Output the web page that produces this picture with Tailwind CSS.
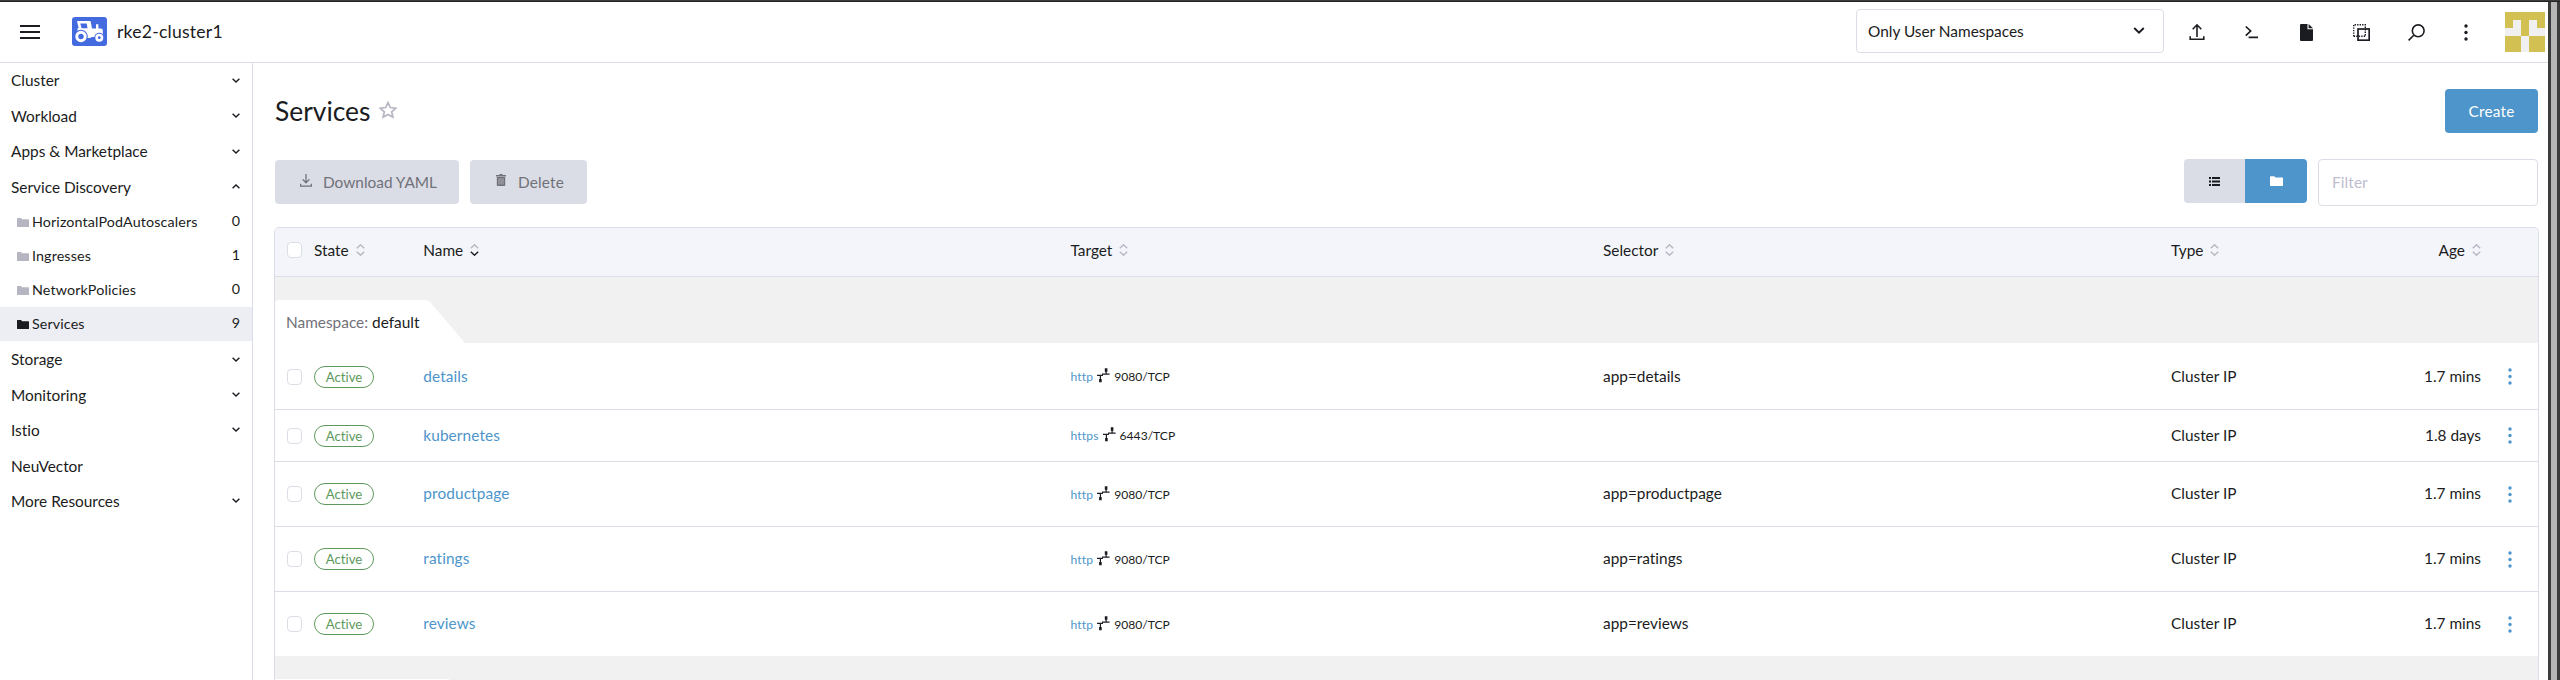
<!DOCTYPE html>
<html lang="en"><head><meta charset="utf-8"><title>rke2-cluster1 - Services</title>
<script src="https://cdn.jsdelivr.net/npm/@tailwindcss/browser@4"></script></head>
<body class="w-[2560px] h-[680px] overflow-hidden bg-white font-['Lato',sans-serif] [font-variant-ligatures:none] text-[15.4px] leading-[20px] text-[#1b1c21] flex flex-col">
<svg class="hidden">
<symbol id="down" viewBox="0 0 8 5"><path d="M.6 .7 4 4 7.4 .7" fill="none" stroke="currentColor" stroke-width="1.4"/></symbol>
<symbol id="folder" viewBox="0 0 12 9"><path d="M0 .5Q0 0 .5 0H4L5.2 1.2H11.4Q12 1.2 12 1.8V8.4Q12 9 11.4 9H.6Q0 9 0 8.4Z" fill="currentColor"/></symbol>
<symbol id="sort" viewBox="0 0 9 12"><path d="M.8 4.3 4.5 .8 8.2 4.3" fill="none" stroke="#b6b6c2" stroke-width="1.4"/><path d="M.8 7.7 4.5 11.2 8.2 7.7" fill="none" stroke="currentColor" stroke-width="1.4"/></symbol>
<symbol id="dots" viewBox="0 0 4 17"><circle cx="2" cy="2" r="1.7" fill="currentColor"/><circle cx="2" cy="8.5" r="1.7" fill="currentColor"/><circle cx="2" cy="15" r="1.7" fill="currentColor"/></symbol>
<symbol id="port" viewBox="0 0 13 15"><path d="M7.8 .3h2.6v3.4h-.7V5.6h2.9v1.2H5.9V8H4v3h.7v3.2H2.1V11h.7V8H0V6.8h5V5.6h3.5V3.7h-.7z" fill="currentColor"/></symbol>
</svg>
<div class="h-[2px] shrink-0 bg-[#3c3c3c] border-b border-[#222222]"></div>
<div class="flex flex-1 min-h-0">
<div class="w-[2548px] flex flex-col">
<header class="h-[61px] shrink-0 border-b border-[#dcdee7] flex items-center pl-5 pr-[3px]">
  <svg class="w-5 h-[14px]" viewBox="0 0 20 14"><path d="M0 1h20M0 7h20M0 13h20" stroke="#1b1c21" stroke-width="1.9"/></svg>
  <svg class="ml-8 w-[35px] h-[29px] -mt-px" viewBox="0 0 35 29"><rect width="35" height="29" rx="3" fill="#446ae0"/>
   <path d="M5.2 4H17.6q1 0 1.2 1L20 11.5h4V7.2h2.4v4.3H29q1.8 0 1.8 2V20H20l-2 1H13L5.5 14.5V11.2h1.2L5.2 5z" fill="#fff"/><path d="M8.3 6.5h6.4l.8 4.8H9.6z" fill="#446ae0"/><circle cx="9" cy="19.5" r="6.8" fill="#446ae0"/><circle cx="9" cy="19.5" r="4.2" fill="none" stroke="#fff" stroke-width="3"/><circle cx="27.3" cy="20.7" r="5" fill="#446ae0"/><circle cx="27.3" cy="20.7" r="2.7" fill="none" stroke="#fff" stroke-width="2.6"/></svg>
  <div class="ml-[10px] text-[17.6px] tracking-[0.22px]">rke2-cluster1</div>
  <div class="ml-auto w-[308px] h-11 -mt-[3px] border border-[#dcdee7] rounded-[4px] flex items-center justify-between pl-[11px] pr-[18px]"><span>Only User Namespaces</span><svg class="w-3 h-[7px]"><use href="#down"/></svg></div>
  <svg class="ml-[25px] w-4 h-[18px]" viewBox="0 0 16 18"><path d="M8 14V2.2M3.7 6.3 8 1.8l4.3 4.5M1.2 13.3v3h13.6v-3" fill="none" stroke="#1b1c21" stroke-width="1.6"/></svg>
  <svg class="ml-10 w-[13px] h-[14px]" viewBox="0 0 13 14"><path d="M.8 1.5 5.6 6 .8 10.6M3.6 12.4H13" fill="none" stroke="#1b1c21" stroke-width="1.7"/></svg>
  <svg class="ml-[42px] w-[13px] h-[17px]" viewBox="0 0 13 17"><path d="M1 0H7.5V5.2H13V16q0 1-1 1H1q-1 0-1-1V1Q0 0 1 0z" fill="#1b1c21"/><path d="M8.6 0 13 4.2H8.6z" fill="#1b1c21"/></svg>
  <svg class="ml-10 w-[17px] h-[17px]" viewBox="0 0 17 17" fill="none" stroke="#1b1c21" stroke-width="1.4"><path d="M.7 12.3V.7H12.3V12.3H.7" stroke-dasharray="1.4 1.1"/><rect x="5" y="5" width="11.2" height="11.2" stroke-width="1.7"/></svg>
  <svg class="ml-[38px] w-[17px] h-[17px]" viewBox="0 0 17 17" fill="none" stroke="#1b1c21" stroke-width="1.6"><circle cx="10.2" cy="6.8" r="5.9"/><path d="M5.8 11.2.6 16.4"/></svg>
  <svg class="ml-[39px] w-1 h-[17px]"><use href="#dots"/></svg>
  <svg class="ml-[37px] w-10 h-10" viewBox="0 0 5 5" shape-rendering="crispEdges"><path d="M0 0h5v5H0z" fill="#d2c053"/><path d="M1 1h1v2H0V2h1zM3 1h1v1h1v1H3zM2 3h1v2H2z" fill="#f0f0f0"/></svg>
</header>
<div class="flex flex-1 min-h-0">
<nav class="w-[253px] shrink-0 border-r border-[#dcdee7] [&>div]:pr-3 [&>div]:flex [&>div]:items-center [&>div]:justify-between">
  <div class="h-[35.6px] pl-[11px] pb-[1.4px]"><span>Cluster</span><svg class="w-2 h-[5px]"><use href="#down"/></svg></div>
  <div class="h-[35.6px] pl-[11px] pb-[1.4px]"><span>Workload</span><svg class="w-2 h-[5px]"><use href="#down"/></svg></div>
  <div class="h-[35.6px] pl-[11px] pb-[1.4px]"><span>Apps &amp; Marketplace</span><svg class="w-2 h-[5px]"><use href="#down"/></svg></div>
  <div class="h-[35.6px] pl-[11px] pb-[1.4px]"><span>Service Discovery</span><svg class="w-2 h-[5px] rotate-180"><use href="#down"/></svg></div>
  <div class="h-[34px] pl-[17px] text-[14.3px]"><span class="flex items-center gap-[3px]"><svg class="w-3 h-[9px] text-[#b6b6c2]"><use href="#folder"/></svg><span class="tracking-[0.12px]">HorizontalPodAutoscalers</span></span><span class="pb-[2px]">0</span></div>
  <div class="h-[34px] pl-[17px] text-[14.3px]"><span class="flex items-center gap-[3px]"><svg class="w-3 h-[9px] text-[#b6b6c2]"><use href="#folder"/></svg><span class="tracking-[0.12px]">Ingresses</span></span><span class="pb-[2px]">1</span></div>
  <div class="h-[34px] pl-[17px] text-[14.3px]"><span class="flex items-center gap-[3px]"><svg class="w-3 h-[9px] text-[#b6b6c2]"><use href="#folder"/></svg><span class="tracking-[0.12px]">NetworkPolicies</span></span><span class="pb-[2px]">0</span></div>
  <div class="h-[34px] pl-[17px] text-[14.3px] bg-[#edeef3]"><span class="flex items-center gap-[3px]"><svg class="w-3 h-[9px]"><use href="#folder"/></svg><span class="tracking-[0.12px]">Services</span></span><span class="pb-[2px]">9</span></div>
  <div class="h-[35.6px] pl-[11px]"><span>Storage</span><svg class="w-2 h-[5px]"><use href="#down"/></svg></div>
  <div class="h-[35.6px] pl-[11px]"><span>Monitoring</span><svg class="w-2 h-[5px]"><use href="#down"/></svg></div>
  <div class="h-[35.6px] pl-[11px] pb-[.8px]"><span>Istio</span><svg class="w-2 h-[5px]"><use href="#down"/></svg></div>
  <div class="h-[35.6px] pl-[11px]"><span>NeuVector</span></div>
  <div class="h-[35.6px] pl-[11px] pb-[1.2px]"><span>More Resources</span><svg class="w-2 h-[5px]"><use href="#down"/></svg></div>
</nav>
<main class="flex-1 min-w-0 pl-[21px] pr-[9px] pt-[26px] flex flex-col">
  <div class="h-11 flex items-center pr-px">
    <h1 class="pl-px text-[26.4px] leading-8">Services</h1>
    <svg class="ml-[9px] w-[18px] h-[18px] -mt-0.5" viewBox="0 0 18 18"><path d="M9 1.6 11.3 6.5 16.8 7.1 12.7 10.8 13.9 16.2 9 13.5 4.1 16.2 5.3 10.8 1.2 7.1 6.7 6.5z" fill="none" stroke="#b6b6c2" stroke-width="1.7"/></svg>
    <button class="ml-auto w-[93px] h-11 rounded-[4px] bg-[#4d95ca] text-white tracking-[0.2px]">Create</button>
  </div>
  <div class="mt-[26px] h-[47px] flex items-start px-px">
    <button class="mt-px w-[184px] h-11 rounded-[4px] bg-[#dadde5] text-[#717179] flex items-center pl-[25px]"><svg class="w-3 h-[13px] -mt-1" viewBox="0 0 12 13"><path d="M6 0V8.5M2.6 5.4 6 8.8 9.4 5.4M.6 9.8v2.3H11.4V9.8" fill="none" stroke="currentColor" stroke-width="1.3"/></svg><span class="ml-[11px]">Download YAML</span></button>
    <button class="mt-px ml-[11px] w-[117px] h-11 rounded-[4px] bg-[#dadde5] text-[#717179] flex items-center pl-[26px]"><svg class="w-[10px] h-[12px] -mt-1" viewBox="0 0 10 12"><path d="M3.5 0h3v1H10v1.4H0V1h3.5zM.8 3h8.4v8.2q0 .8-.8.8H1.6q-.8 0-.8-.8z" fill="currentColor"/><path d="M3 4.2v6.3M5 4.2v6.3M7 4.2v6.3" stroke="#dadde5" stroke-width=".6"/></svg><span class="ml-3 tracking-[0.15px]">Delete</span></button>
    <div class="ml-auto flex rounded-[4px] overflow-hidden">
      <div class="w-[61px] h-11 bg-[#dadde5] flex items-center justify-center"><svg class="w-[11px] h-[9px]" viewBox="0 0 11 9"><path d="M0 1h2M3 1h8M0 4.5h2M3 4.5h8M0 8h2M3 8h8" stroke="#1b1c21" stroke-width="1.8"/></svg></div>
      <div class="w-[62px] h-11 bg-[#4d95ca] text-white flex items-center justify-center"><svg class="w-[13px] h-[10px]"><use href="#folder"/></svg></div>
    </div>
    <div class="ml-[11px] w-[220px] h-[47px] rounded-[4px] border border-[#dcdee7] flex items-center pl-[13px] pb-px text-[#bebed0] tracking-[0.1px]">Filter</div>
  </div>
  <section class="mt-[21px] flex-1 min-h-0 border border-b-0 border-[#dcdee7] rounded-t-[5px] overflow-hidden">
    <div class="h-[49px] pb-1 bg-[#f4f5fa] border-b border-[#dcdee7] grid grid-cols-[39px_109.3px_647.2px_532.5px_568px_219px_91px_57px] items-center [&>div]:flex [&>div]:items-center [&>div]:gap-[7px]">
      <div class="pl-3"><i class="w-[15px] h-4 rounded-[4px] border border-[#dcdee7] bg-white"></i></div>
      <div>State<svg class="w-[9px] h-3 text-[#b6b6c2]"><use href="#sort"/></svg></div>
      <div>Name<svg class="w-[9px] h-3"><use href="#sort"/></svg></div>
      <div>Target<svg class="w-[9px] h-3 text-[#b6b6c2]"><use href="#sort"/></svg></div>
      <div>Selector<svg class="w-[9px] h-3 text-[#b6b6c2]"><use href="#sort"/></svg></div>
      <div>Type<svg class="w-[9px] h-3 text-[#b6b6c2]"><use href="#sort"/></svg></div>
      <div class="justify-end">Age<svg class="w-[9px] h-3 text-[#b6b6c2]"><use href="#sort"/></svg></div>
    </div>
    <div class="h-[66px] bg-[#f1f1f1] flex items-end"><div class="w-[190px] h-[43px] bg-white rounded-tl-[4px] [clip-path:polygon(0_0,151px_0,155px_2px,190px_100%,0_100%)] flex items-center pl-[11px] pt-px"><span><span class="text-[#717179]">Namespace:</span> default</span></div></div>
    <div id="rows"></div>
    <div class="h-[23px] bg-[#f1f1f1]"></div>
    <div class="h-[1px] bg-[#f1f1f1]"><div class="w-[174px] h-full bg-white"></div></div>
  </section>
</main>
</div>
</div>
<div class="flex-1 bg-[#b7b7b7] border-x-3 border-[#3c3c3c]"></div>
</div>
<script>
const services = [
  ['details', 'http', '9080/TCP', 'app=details', '1.7 mins', 'h-[67px] border-b pt-px'],
  ['kubernetes', 'https', '6443/TCP', '', '1.8 days', 'h-[52px] border-b'],
  ['productpage', 'http', '9080/TCP', 'app=productpage', '1.7 mins', 'h-[65px] border-b'],
  ['ratings', 'http', '9080/TCP', 'app=ratings', '1.7 mins', 'h-[65px] border-b'],
  ['reviews', 'http', '9080/TCP', 'app=reviews', '1.7 mins', 'h-[64px]'],
];
document.getElementById('rows').innerHTML = services.map(([name, proto, port, sel, age, cls]) => `
<div class="${cls} border-[#dcdee7] grid grid-cols-[39px_109.3px_647.2px_532.5px_568px_219px_91px_57px] items-center">
  <div class="pl-3"><i class="block w-[15px] h-4 rounded-[4px] border border-[#dcdee7] bg-white"></i></div>
  <div class="w-[60px] h-[22px] rounded-full border border-[#5d995d] text-[#5d995d] text-[13.2px] leading-[20px] text-center">Active</div>
  <div class="text-[#4d95ca] tracking-[0.1px] pb-[1.4px]">${name}</div>
  <div class="flex items-center text-[12.1px] pt-[1.4px]"><span class="text-[#4d95ca] tracking-[0.15px]">${proto}</span><svg class="mx-1 w-[13px] h-[15px] -mt-[3px]"><use href="#port"/></svg><span>${port}</span></div>
  <div class="pb-[1.4px]">${sel}</div>
  <div class="pb-[1.4px]">Cluster IP</div>
  <div class="text-right pb-[1.4px]">${age}</div>
  <svg class="ml-[27px] w-1 h-[17px] text-[#4d95ca]"><use href="#dots"/></svg>
</div>`).join('');
</script>
</body></html>
